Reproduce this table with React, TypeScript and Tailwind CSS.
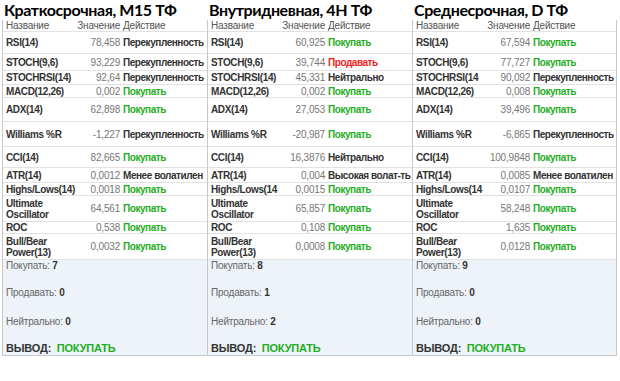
type Row = { name: string[]; value: string; action: string; kind: 'buy' | 'sell' | 'n'; h: string };

type Panel = { title: string; rows: Row[]; buy: number; sell: number; neutral: number; verdict: string };

const heights = ['h-[22px]', 'h-[17px]', 'h-[14px]', 'h-[13px]', 'h-[24px]', 'h-[25px]', 'h-[21px]', 'h-[15px]', 'h-[13px]', 'h-[26px]', 'h-[12px]', 'h-[26px]'];

const names = [
  ['RSI(14)'],
  ['STOCH(9,6)'],
  ['STOCHRSI(14)'],
  ['MACD(12,26)'],
  ['ADX(14)'],
  ['Williams %R'],
  ['CCI(14)'],
  ['ATR(14)'],
  ['Highs/Lows(14)'],
  ['Ultimate', 'Oscillator'],
  ['ROC'],
  ['Bull/Bear', 'Power(13)'],
];

function build(data: [string, string, 'buy' | 'sell' | 'n'][], nameOverride: Record<number, string> = {}): Row[] {
  return data.map(([value, action, kind], i) => ({
    name: nameOverride[i] ? [nameOverride[i]] : names[i],
    value,
    action,
    kind,
    h: heights[i],
  }));
}

const panels: Panel[] = [
  {
    title: 'Краткосрочная, M15 ТФ',
    rows: build([
      ['78,458', 'Перекупленность', 'n'],
      ['93,229', 'Перекупленность', 'n'],
      ['92,64', 'Перекупленность', 'n'],
      ['0,002', 'Покупать', 'buy'],
      ['62,898', 'Покупать', 'buy'],
      ['-1,227', 'Перекупленность', 'n'],
      ['82,665', 'Покупать', 'buy'],
      ['0,0012', 'Менее волатилен', 'n'],
      ['0,0018', 'Покупать', 'buy'],
      ['64,561', 'Покупать', 'buy'],
      ['0,538', 'Покупать', 'buy'],
      ['0,0032', 'Покупать', 'buy'],
    ]),
    buy: 7,
    sell: 0,
    neutral: 0,
    verdict: 'ПОКУПАТЬ',
  },
  {
    title: 'Внутридневная, 4H ТФ',
    rows: build(
      [
        ['60,925', 'Покупать', 'buy'],
        ['39,744', 'Продавать', 'sell'],
        ['45,331', 'Нейтрально', 'n'],
        ['0,002', 'Покупать', 'buy'],
        ['27,053', 'Покупать', 'buy'],
        ['-20,987', 'Покупать', 'buy'],
        ['16,3876', 'Нейтрально', 'n'],
        ['0,004', 'Высокая волат-ть', 'n'],
        ['0,0015', 'Покупать', 'buy'],
        ['65,857', 'Покупать', 'buy'],
        ['0,108', 'Покупать', 'buy'],
        ['0,0008', 'Покупать', 'buy'],
      ],
      { 8: 'Highs/Lows(14' },
    ),
    buy: 8,
    sell: 1,
    neutral: 2,
    verdict: 'ПОКУПАТЬ',
  },
  {
    title: 'Среднесрочная, D ТФ',
    rows: build(
      [
        ['67,594', 'Покупать', 'buy'],
        ['77,727', 'Покупать', 'buy'],
        ['90,092', 'Перекупленность', 'n'],
        ['0,008', 'Покупать', 'buy'],
        ['39,496', 'Покупать', 'buy'],
        ['-6,865', 'Перекупленность', 'n'],
        ['100,9848', 'Покупать', 'buy'],
        ['0,0085', 'Менее волатилен', 'n'],
        ['0,0107', 'Покупать', 'buy'],
        ['58,248', 'Покупать', 'buy'],
        ['1,635', 'Покупать', 'buy'],
        ['0,0128', 'Покупать', 'buy'],
      ],
      { 2: 'STOCHRSI(14', 8: 'Highs/Lows(14' },
    ),
    buy: 9,
    sell: 0,
    neutral: 0,
    verdict: 'ПОКУПАТЬ',
  },
];

const actionColor = { buy: 'text-[#1fae1f]', sell: 'text-[#f01e1e]', n: 'text-[#333]' };

function PanelView({ p, last }: { p: Panel; last: boolean }) {
  return (
    <div className="w-[205px] flex flex-col">
      <div className="h-[20px] pl-[2px] font-['Lato',sans-serif] font-bold text-[16px] tracking-[-0.4px] leading-[20px] text-black whitespace-nowrap">
        {p.title}
      </div>
      <div className={`border-l border-[#c8c8c8] ${last ? 'border-r' : ''} border-b`}>
        <div className="grid grid-cols-[70px_47px_1fr] h-[12px] items-center border-b border-[#e2e2e2] text-[#555] leading-none tracking-[-0.2px]">
          <span className="pl-[3px]">Название</span>
          <span className="text-right">Значение</span>
          <span className="pl-[3px]">Действие</span>
        </div>
        {p.rows.map((r, i) => (
          <div key={i} className={`grid grid-cols-[70px_47px_1fr] ${r.h} items-center border-b border-[#e2e2e2] leading-[11px]`}>
            <span className="pl-[3px] font-bold text-[#333] whitespace-nowrap tracking-[-0.35px]">
              {r.name.map((n, j) => (
                <span key={j} className="block">
                  {n}
                </span>
              ))}
            </span>
            <span className="text-right text-[#777] whitespace-nowrap tracking-[-0.2px]">{r.value}</span>
            <span className={`pl-[3px] font-bold whitespace-nowrap tracking-[-0.45px] ${actionColor[r.kind]}`}>{r.action}</span>
          </div>
        ))}
        <div className="h-[95px] bg-[#eef3fa] pl-[3px] flex flex-col text-[#666] tracking-[-0.2px]">
          <div className="h-[27px] leading-[12px]">
            Покупать: <b className="text-[#333]">{p.buy}</b>
          </div>
          <div className="h-[29px] leading-[12px]">
            Продавать: <b className="text-[#333]">{p.sell}</b>
          </div>
          <div className="h-[26px] leading-[12px]">
            Нейтрально: <b className="text-[#333]">{p.neutral}</b>
          </div>
          <div className="font-bold text-[11px] leading-[12px] text-[#333]">
            ВЫВОД:&nbsp;&nbsp;<span className="text-[#1fae1f]">{p.verdict}</span>
          </div>
        </div>
      </div>
    </div>
  );
}

export default function App() {
  return (
    <div className="w-[620px] h-[381px] bg-white flex pl-[2px] font-['Liberation_Sans',Arial,sans-serif] text-[10px] overflow-hidden">
      {panels.map((p, i) => (
        <PanelView key={i} p={p} last={i === panels.length - 1} />
      ))}
    </div>
  );
}
